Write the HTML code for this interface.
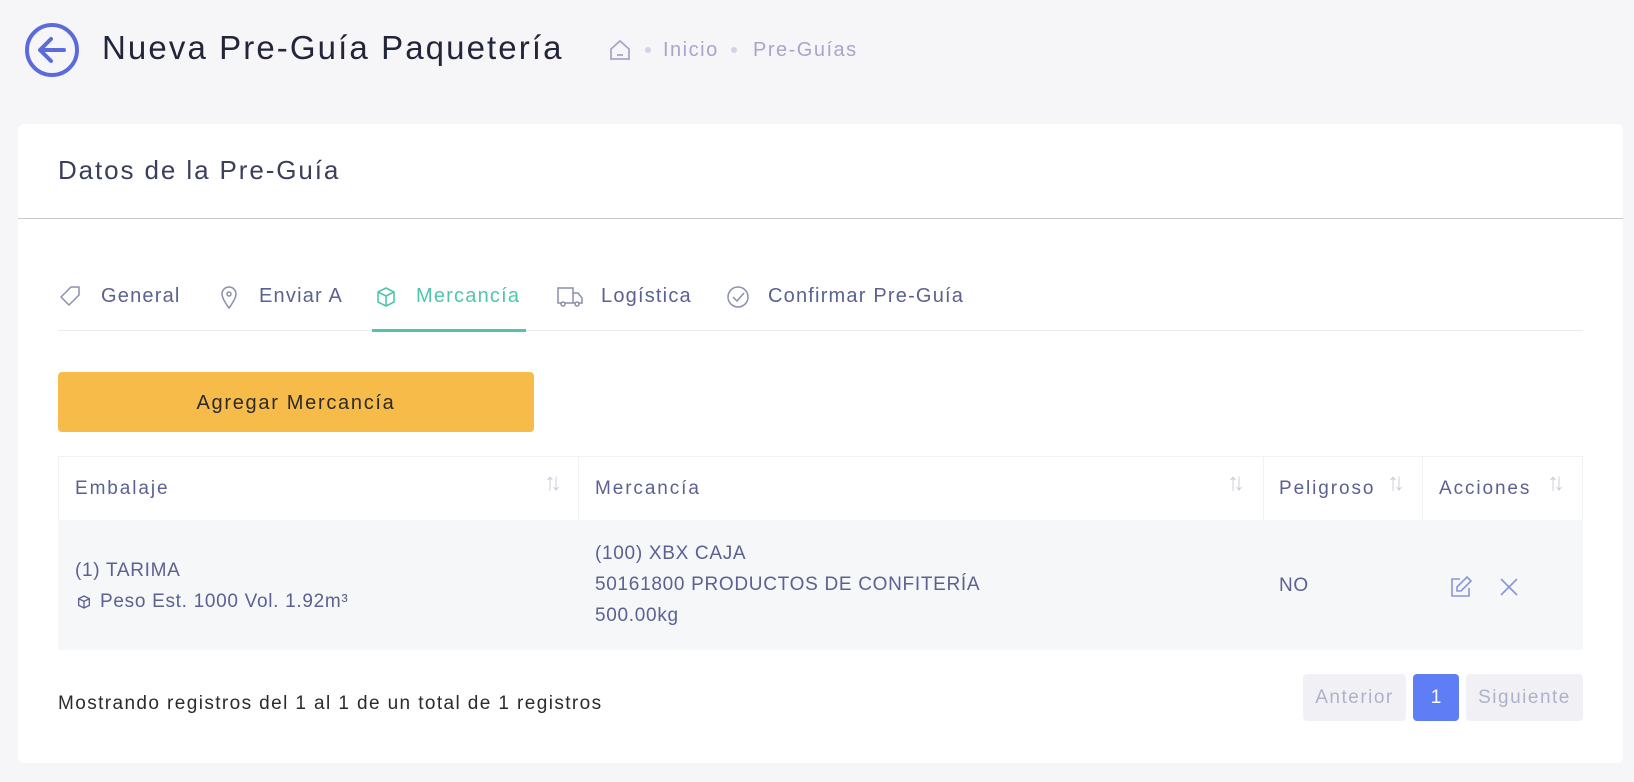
<!DOCTYPE html>
<html><head><meta charset="utf-8"><style>
*{box-sizing:border-box;margin:0;padding:0}
body{width:1634px;height:782px;background:#f6f6f9;font-family:"Liberation Sans",sans-serif;position:relative;overflow:hidden;color:#3f4254}
.abs{position:absolute}
.card{left:18px;top:124px;width:1605px;height:639px;background:#fff;border-radius:6px}
.t{white-space:nowrap}
.tab{font-size:20px;color:#5b6191;top:285px;letter-spacing:1.2px}
.th{font-size:19px;color:#5b6191;letter-spacing:1.9px}
.sort{font-size:24px;color:#c9cde0;letter-spacing:-6px}
.cell{font-size:19px;color:#5b6191;line-height:31px;letter-spacing:0.7px}
</style></head><body>
<svg class="abs" style="left:24px;top:22px" width="56" height="56" viewBox="0 0 56 56"><circle cx="28" cy="28" r="25" fill="none" stroke="#5b6bdb" stroke-width="4"/><path d="M40 28H16M27 17L16 28l11 11" fill="none" stroke="#5b6bdb" stroke-width="4" stroke-linecap="round" stroke-linejoin="round"/></svg>
<div class="abs t" style="left:102px;top:29px;font-size:33px;color:#23263a;letter-spacing:2.1px">Nueva Pre-Guía Paquetería</div>
<svg class="abs" style="left:608px;top:38px" width="24" height="24" viewBox="0 0 24 24"><path d="M3 11L12 3l9 8v10H3z" fill="none" stroke="#a9a5c9" stroke-width="1.8"/><path d="M9 17h6" stroke="#a9a5c9" stroke-width="1.8"/></svg>
<div class="abs" style="left:645px;top:47px;width:6px;height:6px;border-radius:3px;background:#d4d2e6"></div>
<div class="abs t" style="left:663px;top:39px;font-size:20px;color:#a9a5c9;letter-spacing:1.5px">Inicio</div>
<div class="abs" style="left:731px;top:47px;width:6px;height:6px;border-radius:3px;background:#d4d2e6"></div>
<div class="abs t" style="left:753px;top:39px;font-size:20px;color:#a9a5c9;letter-spacing:1.5px">Pre-Guías</div>
<div class="abs card"></div>
<div class="abs t" style="left:58px;top:155px;font-size:26px;color:#3a3f5c;letter-spacing:1.9px">Datos de la Pre-Guía</div>
<div class="abs" style="left:18px;top:218px;width:1605px;height:1px;background:#c9c9cf"></div>
<svg class="abs" style="left:58px;top:284px" width="24" height="24" viewBox="0 0 24 24"><path d="M13 3h8v8l-10 10-8-8z" fill="none" stroke="#8a8fae" stroke-width="1.5" stroke-linejoin="round"/></svg>
<div class="abs t tab" style="left:101px">General</div>
<svg class="abs" style="left:217px;top:284px" width="24" height="26" viewBox="0 0 24 26"><path d="M12 24s-7-9-7-14a7 7 0 0114 0c0 5-7 14-7 14z" fill="none" stroke="#8a8fae" stroke-width="1.5"/><circle cx="12" cy="10" r="2" fill="none" stroke="#8a8fae" stroke-width="1.5"/></svg>
<div class="abs t tab" style="left:259px">Enviar A</div>
<svg class="abs" style="left:374px;top:285px" width="24" height="24" viewBox="0 0 24 24"><path d="M12 3l8 4v10l-8 4-8-4V7z M4 7l8 4 8-4 M12 11v10" fill="none" stroke="#4fc6ac" stroke-width="1.6" stroke-linejoin="round"/></svg>
<div class="abs t tab" style="left:416px;color:#4fc6ac">Mercancía</div>
<svg class="abs" style="left:556px;top:285px" width="28" height="24" viewBox="0 0 28 24"><path d="M2 3h15v15H2z M17 8h5l4 5v5h-9" fill="none" stroke="#8a8fae" stroke-width="1.5"/><circle cx="7" cy="19" r="2" fill="#fff" stroke="#8a8fae" stroke-width="1.5"/><circle cx="21" cy="19" r="2" fill="#fff" stroke="#8a8fae" stroke-width="1.5"/></svg>
<div class="abs t tab" style="left:601px">Logística</div>
<svg class="abs" style="left:725px;top:284px" width="26" height="26" viewBox="0 0 26 26"><circle cx="13" cy="13" r="10" fill="none" stroke="#8a8fae" stroke-width="1.5"/><path d="M8 13l4 4 7-8" fill="none" stroke="#8a8fae" stroke-width="1.5"/></svg>
<div class="abs t tab" style="left:768px">Confirmar Pre-Guía</div>
<div class="abs" style="left:58px;top:330px;width:1525px;height:1px;background:#ebedf3"></div>
<div class="abs" style="left:372px;top:329px;width:154px;height:3px;background:#4fc6ac"></div>
<div class="abs" style="left:58px;top:372px;width:476px;height:60px;background:#f6bb48;border-radius:4px;font-size:20px;color:#2b2b2b;text-align:center;line-height:62px;letter-spacing:1.7px">Agregar Mercancía</div>
<div class="abs" style="left:58px;top:456px;width:1525px;height:64px;border:1px solid #f1f2f6;border-bottom:none"></div>
<div class="abs" style="left:578px;top:456px;width:1px;height:64px;background:#f1f2f6"></div>
<div class="abs" style="left:1263px;top:456px;width:1px;height:64px;background:#f1f2f6"></div>
<div class="abs" style="left:1422px;top:456px;width:1px;height:64px;background:#f1f2f6"></div>
<div class="abs t th" style="left:75px;top:478px">Embalaje</div>
<div class="abs t sort" style="left:544px;top:469px">↑↓</div>
<div class="abs t th" style="left:595px;top:478px">Mercancía</div>
<div class="abs t sort" style="left:1227px;top:469px">↑↓</div>
<div class="abs t th" style="left:1279px;top:478px">Peligroso</div>
<div class="abs t sort" style="left:1387px;top:469px">↑↓</div>
<div class="abs t th" style="left:1439px;top:478px">Acciones</div>
<div class="abs t sort" style="left:1547px;top:469px">↑↓</div>
<div class="abs" style="left:58px;top:520px;width:1525px;height:130px;background:#f6f7f9"></div>
<div class="abs t cell" style="left:75px;top:555px">(1) TARIMA</div>
<svg class="abs" style="left:76px;top:594px" width="16" height="16" viewBox="0 0 24 24"><path d="M12 3l8 4v10l-8 4-8-4V7z M4 7l8 4 8-4 M12 11v10" fill="none" stroke="#5b6191" stroke-width="2"/></svg>
<div class="abs t cell" style="left:100px;top:586px">Peso Est. 1000 Vol. 1.92m³</div>
<div class="abs t cell" style="left:595px;top:538px">(100) XBX CAJA<br>50161800 PRODUCTOS DE CONFITERÍA<br>500.00kg</div>
<div class="abs t cell" style="left:1279px;top:570px">NO</div>
<svg class="abs" style="left:1450px;top:576px" width="22" height="22" viewBox="0 0 22 22"><path d="M10 3H2v17h17v-8" fill="none" stroke="#8b95d8" stroke-width="1.6"/><path d="M17 1l4 4-10 10H7v-4z" fill="none" stroke="#8b95d8" stroke-width="1.6"/></svg>
<svg class="abs" style="left:1499px;top:577px" width="20" height="20" viewBox="0 0 20 20"><path d="M2 2l16 16M18 2L2 18" stroke="#8b95d8" stroke-width="1.6"/></svg>
<div class="abs t" style="left:58px;top:693px;font-size:19px;color:#2b2b2b;letter-spacing:1.4px">Mostrando registros del 1 al 1 de un total de 1 registros</div>
<div class="abs" style="left:1303px;top:674px;width:103px;height:47px;background:#f1f1f5;border-radius:4px;color:#aeb1cb;font-size:19px;text-align:center;line-height:47px;letter-spacing:1.5px">Anterior</div>
<div class="abs" style="left:1413px;top:674px;width:46px;height:47px;background:#5f7df5;border-radius:4px;color:#fff;font-size:19px;text-align:center;line-height:47px">1</div>
<div class="abs" style="left:1466px;top:674px;width:117px;height:47px;background:#f1f1f5;border-radius:4px;color:#aeb1cb;font-size:19px;text-align:center;line-height:47px;letter-spacing:1.5px">Siguiente</div>
</body></html>
